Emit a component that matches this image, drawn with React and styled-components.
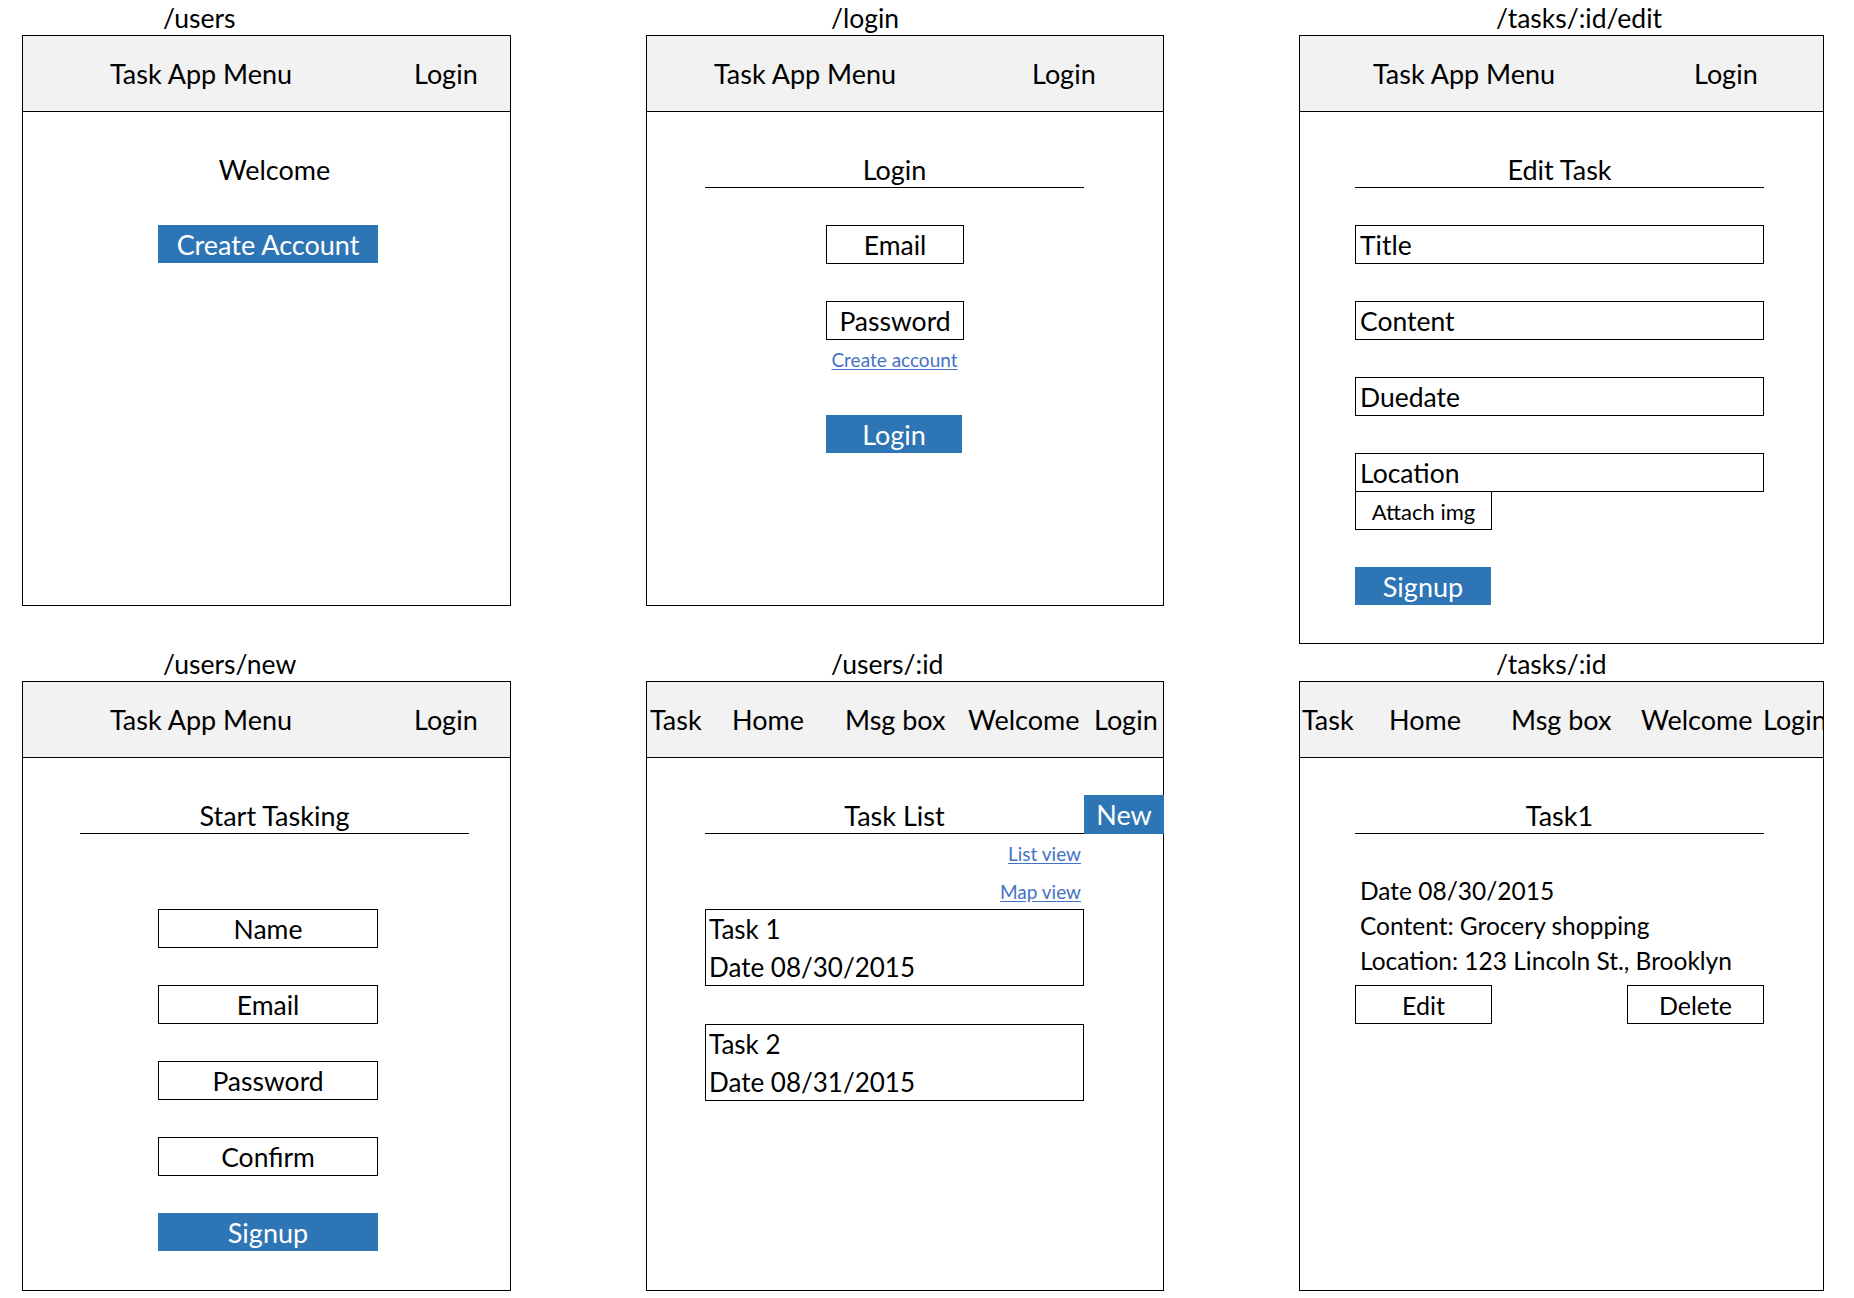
import React from 'react';
import styled, { createGlobalStyle } from 'styled-components';

const GlobalStyle = createGlobalStyle`
  html, body { margin: 0; padding: 0; background: #ffffff; }
  body {
    font-family: Lato, "Open Sans", "Noto Sans", sans-serif;
    color: #000000;
    -webkit-font-smoothing: antialiased;
  }
  * { box-sizing: border-box; }
`;

const Board = styled.main`
  width: 1854px;
  height: 1298px;
  padding-left: 22px;
  display: grid;
  grid-template-columns: 489px 518px 525px;
  grid-template-rows: 644px 654px;
  column-gap: 135px;
  align-items: start;
`;

const Screen = styled.section`
  display: flex;
  flex-direction: column;
`;

const RouteLabel = styled.div`
  height: ${p => p.$h}px;
  padding-left: ${p => p.$indent}px;
  display: flex;
  align-items: flex-end;
  font-size: 26.5px;
  line-height: 33px;
  white-space: nowrap;
`;

const Frame = styled.div`
  height: ${p => p.$h}px;
  border: 1px solid #000;
  background: #fff;
  display: flex;
  flex-direction: column;
`;

const HeaderBar = styled.header`
  height: 76px;
  flex: 0 0 76px;
  border-bottom: 1px solid #000;
  background: #f2f2f2;
  padding-left: ${p => p.$pl}px;
  display: grid;
  grid-template-columns: ${p => p.$cols};
  align-items: center;
  overflow: hidden;
  white-space: nowrap;
  font-size: 27px;
  line-height: 34px;
`;

const HeaderItem = styled.span``;

const Body = styled.div`
  padding-top: 41px;
  display: flex;
  flex-direction: column;
`;

const Content = styled.div`
  margin-left: ${p => p.$left}px;
  width: ${p => p.$w}px;
  display: flex;
  flex-direction: column;
`;

const Title = styled.div`
  height: 35px;
  flex: 0 0 auto;
  text-align: center;
  font-size: 27px;
  line-height: 34px;
  border-bottom: 1px solid ${p => (p.$rule ? '#000' : 'transparent')};
`;

const Field = styled.div`
  height: 39px;
  width: ${p => (p.$w ? `${p.$w}px` : '100%')};
  margin-left: ${p => p.$ml || 0}px;
  margin-top: ${p => p.$mt || 0}px;
  border: 1px solid #000;
  font-size: ${p => p.$fs || 26.5}px;
  line-height: 39px;
  text-align: ${p => p.$align || 'center'};
  padding-left: ${p => (p.$align === 'left' ? 4 : 0)}px;
  white-space: nowrap;
  overflow: hidden;
`;

const PrimaryButton = styled.div`
  height: 38px;
  width: ${p => p.$w}px;
  margin-left: ${p => p.$ml || 0}px;
  margin-top: ${p => p.$mt || 0}px;
  padding-top: 2px;
  background: #2e75b6;
  color: #ffffff;
  font-size: 27px;
  line-height: 36px;
  text-align: center;
  white-space: nowrap;
`;

const TextLink = styled.a`
  display: block;
  margin-top: ${p => p.$mt || 0}px;
  text-align: ${p => p.$align || 'center'};
  padding-right: ${p => p.$pr || 0}px;
  font-size: 19px;
  line-height: 24px;
  color: #4472c4;
  text-decoration: underline;
  text-underline-offset: 2px;
  cursor: pointer;
`;

const TitleRow = styled.div`
  display: flex;
  align-items: flex-end;
`;

const RowTitle = styled(Title)`
  flex: 0 0 ${p => p.$w}px;
`;

const NewButton = styled.div`
  flex: 0 0 80px;
  height: 39px;
  margin-top: -4px;
  margin-right: -1px;
  background: #2e75b6;
  color: #fff;
  font-size: 27px;
  line-height: 39px;
  text-align: center;
  position: relative;
`;

const TaskCard = styled.div`
  height: 77px;
  margin-top: ${p => p.$mt || 0}px;
  border: 1px solid #000;
  padding-left: 3px;
  padding-top: 1px;
  font-size: 26px;
  line-height: 37.5px;
`;

const CardLine = styled.div`
  white-space: nowrap;
`;

const Details = styled.div`
  margin-top: ${p => p.$mt}px;
  padding-left: 5px;
  font-size: 24.5px;
  line-height: 35px;
`;

const DetailLine = styled.div`
  white-space: nowrap;
`;

const ActionRow = styled.div`
  margin-top: ${p => p.$mt}px;
  display: flex;
  justify-content: space-between;
`;

const simpleHeader = (pl, login) => (
  <HeaderBar $pl={pl} $cols={`${login}px auto`}>
    <HeaderItem>Task App Menu</HeaderItem>
    <HeaderItem>Login</HeaderItem>
  </HeaderBar>
);

const navHeader = (pl, widths) => (
  <HeaderBar $pl={pl} $cols={`${widths.map(w => `${w}px`).join(' ')} auto`}>
    {['Task', 'Home', 'Msg box', 'Welcome', 'Login'].map(t => (
      <HeaderItem key={t}>{t}</HeaderItem>
    ))}
  </HeaderBar>
);

export default function App() {
  return (
    <>
      <GlobalStyle />
      <Board>
        {/* Row 1, column 1: /users */}
        <Screen>
          <RouteLabel $h={35} $indent={141}>/users</RouteLabel>
          <Frame $h={571}>
            {simpleHeader(87, 304)}
            <Body>
              <Content $left={57} $w={389}>
                <Title>Welcome</Title>
                <PrimaryButton $w={220} $ml={78} $mt={37}>Create Account</PrimaryButton>
              </Content>
            </Body>
          </Frame>
        </Screen>

        {/* Row 1, column 2: /login */}
        <Screen>
          <RouteLabel $h={35} $indent={185}>/login</RouteLabel>
          <Frame $h={571}>
            {simpleHeader(67, 318)}
            <Body>
              <Content $left={58} $w={379}>
                <Title $rule>Login</Title>
                <Field $w={138} $ml={121} $mt={37}>Email</Field>
                <Field $w={138} $ml={121} $mt={37}>Password</Field>
                <TextLink $mt={8}>Create account</TextLink>
                <PrimaryButton $w={136} $ml={121} $mt={43}>Login</PrimaryButton>
              </Content>
            </Body>
          </Frame>
        </Screen>

        {/* Row 1, column 3: /tasks/:id/edit */}
        <Screen>
          <RouteLabel $h={35} $indent={197}>/tasks/:id/edit</RouteLabel>
          <Frame $h={609}>
            {simpleHeader(73, 321)}
            <Body>
              <Content $left={55} $w={409}>
                <Title $rule>Edit Task</Title>
                <Field $align="left" $mt={37}>Title</Field>
                <Field $align="left" $mt={37}>Content</Field>
                <Field $align="left" $mt={37}>Duedate</Field>
                <Field $align="left" $mt={37}>Location</Field>
                <Field $w={137} $mt={-1} $fs={22}>Attach img</Field>
                <PrimaryButton $w={136} $mt={37}>Signup</PrimaryButton>
              </Content>
            </Body>
          </Frame>
        </Screen>

        {/* Row 2, column 1: /users/new */}
        <Screen>
          <RouteLabel $h={37} $indent={141}>/users/new</RouteLabel>
          <Frame $h={610}>
            {simpleHeader(87, 304)}
            <Body>
              <Content $left={57} $w={389}>
                <Title $rule>Start Tasking</Title>
                <Field $w={220} $ml={78} $mt={75}>Name</Field>
                <Field $w={220} $ml={78} $mt={37}>Email</Field>
                <Field $w={220} $ml={78} $mt={37}>Password</Field>
                <Field $w={220} $ml={78} $mt={37}>Confirm</Field>
                <PrimaryButton $w={220} $ml={78} $mt={37}>Signup</PrimaryButton>
              </Content>
            </Body>
          </Frame>
        </Screen>

        {/* Row 2, column 2: /users/:id */}
        <Screen>
          <RouteLabel $h={37} $indent={185}>/users/:id</RouteLabel>
          <Frame $h={610}>
            {navHeader(3, [82, 113, 123, 126])}
            <Body>
              <Content $left={58} $w={379}>
                <TitleRow>
                  <RowTitle $rule $w={379}>Task List</RowTitle>
                  <NewButton>New</NewButton>
                </TitleRow>
                <TextLink $align="right" $pr={3} $mt={8}>List view</TextLink>
                <TextLink $align="right" $pr={3} $mt={14}>Map view</TextLink>
                <TaskCard $mt={5}>
                  <CardLine>Task 1</CardLine>
                  <CardLine>Date 08/30/2015</CardLine>
                </TaskCard>
                <TaskCard $mt={38}>
                  <CardLine>Task 2</CardLine>
                  <CardLine>Date 08/31/2015</CardLine>
                </TaskCard>
              </Content>
            </Body>
          </Frame>
        </Screen>

        {/* Row 2, column 3: /tasks/:id */}
        <Screen>
          <RouteLabel $h={37} $indent={197}>/tasks/:id</RouteLabel>
          <Frame $h={610}>
            {navHeader(2, [87, 122, 130, 122])}
            <Body>
              <Content $left={55} $w={409}>
                <Title $rule>Task1</Title>
                <Details $mt={39}>
                  <DetailLine>Date 08/30/2015</DetailLine>
                  <DetailLine>Content: Grocery shopping</DetailLine>
                  <DetailLine>Location: 123 Lincoln St., Brooklyn</DetailLine>
                </Details>
                <ActionRow $mt={7}>
                  <Field $w={137} $fs={25}>Edit</Field>
                  <Field $w={137} $fs={25}>Delete</Field>
                </ActionRow>
              </Content>
            </Body>
          </Frame>
        </Screen>
      </Board>
    </>
  );
}
